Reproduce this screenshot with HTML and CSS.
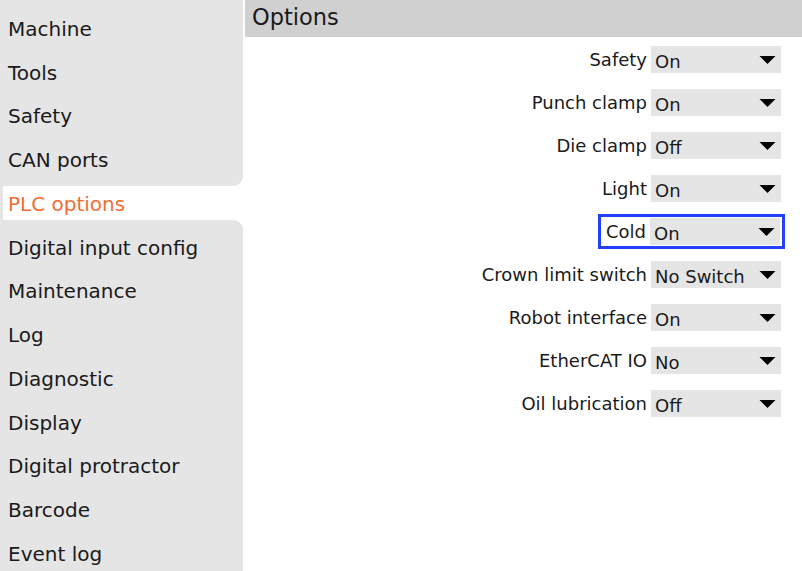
FILE: index.html
```html
<!DOCTYPE html>
<html>
<head>
<meta charset="utf-8">
<link rel="stylesheet" href="styles.css">
</head>
<body>
<div class="app">
  <nav class="sidebar">
    <div class="item">Machine</div>
    <div class="item">Tools</div>
    <div class="item">Safety</div>
    <div class="item">CAN ports</div>
    <div class="item active">PLC options</div>
    <div class="item">Digital input config</div>
    <div class="item">Maintenance</div>
    <div class="item">Log</div>
    <div class="item">Diagnostic</div>
    <div class="item">Display</div>
    <div class="item">Digital protractor</div>
    <div class="item">Barcode</div>
    <div class="item">Event log</div>
  </nav>
  <main class="main">
    <div class="header">Options</div>
    <div class="rows">
      <div class="row"><div class="field"><span class="label">Safety</span><div class="select"><span class="value">On</span><svg class="caret" width="18" height="9" viewBox="0 0 18 9"><polygon points="0,0 18,0 9,9" fill="#000"/></svg></div></div></div>
      <div class="row"><div class="field"><span class="label">Punch clamp</span><div class="select"><span class="value">On</span><svg class="caret" width="18" height="9" viewBox="0 0 18 9"><polygon points="0,0 18,0 9,9" fill="#000"/></svg></div></div></div>
      <div class="row"><div class="field"><span class="label">Die clamp</span><div class="select"><span class="value">Off</span><svg class="caret" width="18" height="9" viewBox="0 0 18 9"><polygon points="0,0 18,0 9,9" fill="#000"/></svg></div></div></div>
      <div class="row"><div class="field"><span class="label">Light</span><div class="select"><span class="value">On</span><svg class="caret" width="18" height="9" viewBox="0 0 18 9"><polygon points="0,0 18,0 9,9" fill="#000"/></svg></div></div></div>
      <div class="row"><div class="field focused"><span class="label">Cold</span><div class="select"><span class="value">On</span><svg class="caret" width="18" height="9" viewBox="0 0 18 9"><polygon points="0,0 18,0 9,9" fill="#000"/></svg></div></div></div>
      <div class="row"><div class="field"><span class="label">Crown limit switch</span><div class="select"><span class="value">No Switch</span><svg class="caret" width="18" height="9" viewBox="0 0 18 9"><polygon points="0,0 18,0 9,9" fill="#000"/></svg></div></div></div>
      <div class="row"><div class="field"><span class="label">Robot interface</span><div class="select"><span class="value">On</span><svg class="caret" width="18" height="9" viewBox="0 0 18 9"><polygon points="0,0 18,0 9,9" fill="#000"/></svg></div></div></div>
      <div class="row"><div class="field"><span class="label">EtherCAT IO</span><div class="select"><span class="value">No</span><svg class="caret" width="18" height="9" viewBox="0 0 18 9"><polygon points="0,0 18,0 9,9" fill="#000"/></svg></div></div></div>
      <div class="row"><div class="field"><span class="label">Oil lubrication</span><div class="select"><span class="value">Off</span><svg class="caret" width="18" height="9" viewBox="0 0 18 9"><polygon points="0,0 18,0 9,9" fill="#000"/></svg></div></div></div>
    </div>
  </main>
</div>
</body>
</html>
```

FILE: styles.css
```css
html, body {
  margin: 0;
  padding: 0;
  background: #fff;
  overflow: hidden;
}
body {
  font-family: "DejaVu Sans", sans-serif;
  color: #1a1a1a;
}
.app {
  display: flex;
  width: 802px;
  height: 571px;
  overflow: hidden;
}
.sidebar {
  width: 243px;
  flex: 0 0 243px;
  background: #e5e5e5;
  padding-top: 6px;
  box-sizing: border-box;
  height: 571px;
  overflow: hidden;
}
.item {
  height: 43.75px;
  display: flex;
  align-items: center;
  padding-left: 8px;
  padding-top: 2px;
  box-sizing: border-box;
  font-size: 20px;
  color: #1a1a1a;
  white-space: nowrap;
}
.item.active {
  position: relative;
  background: #fff;
  color: #f26d34;
  height: 34px;
  margin: 4.875px 0 4.875px 3px;
  padding-left: 5px;
}
.item.active::before,
.item.active::after {
  content: "";
  position: absolute;
  right: 0;
  width: 10px;
  height: 10px;
}
.item.active::before {
  top: -10px;
  background: radial-gradient(circle at 0 0, #e5e5e5 9.5px, #fff 10.5px);
}
.item.active::after {
  top: 100%;
  background: radial-gradient(circle at 0 100%, #e5e5e5 9.5px, #fff 10.5px);
}
.main {
  flex: 1;
  margin-left: 2px;
  display: flex;
  flex-direction: column;
}
.header {
  height: 37px;
  box-sizing: border-box;
  background: #d0d0d0;
  padding-left: 7px;
  font-size: 22.5px;
  line-height: 34px;
  color: #1a1a1a;
}
.rows {
  padding-top: 1px;
  display: flex;
  flex-direction: column;
}
.row {
  height: 43px;
  display: flex;
  justify-content: flex-end;
  align-items: center;
  padding-right: 21px;
}
.field {
  display: flex;
  align-items: center;
  gap: 4px;
}
.field.focused {
  outline: 3px solid #2141ff;
  padding: 1px 2px 1px 5px;
  margin-right: -1px;
}
.label {
  font-size: 18px;
  color: #1a1a1a;
  white-space: nowrap;
}
.select {
  width: 130px;
  height: 27px;
  background: #e5e5e5;
  display: flex;
  align-items: center;
  justify-content: space-between;
  box-sizing: border-box;
  padding: 0 5px 0 4px;
}
.value {
  font-size: 18px;
  padding-top: 3px;
  color: #1a1a1a;
  white-space: nowrap;
}
.caret {
  display: block;
  width: 17px;
  height: 8px;
}
```
